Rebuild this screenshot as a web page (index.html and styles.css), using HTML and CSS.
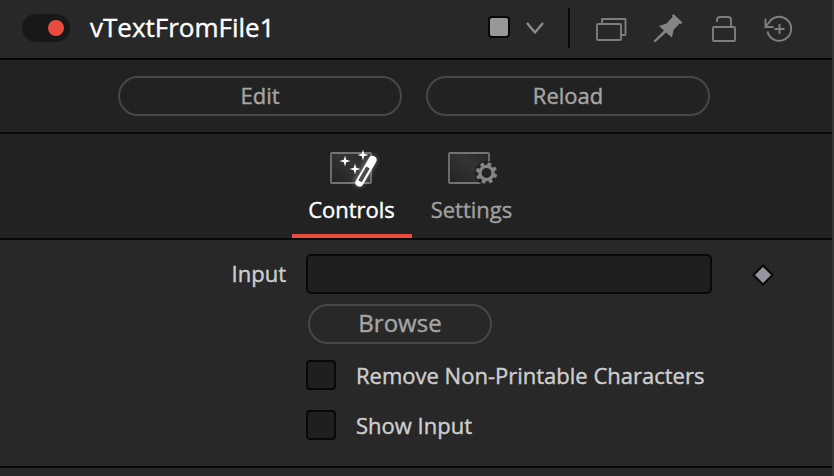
FILE: index.html
```html
<!DOCTYPE html>
<html lang="en">
<head>
<meta charset="utf-8">
<title>vTextFromFile1</title>
<link rel="stylesheet" href="styles.css">
</head>
<body>
<main class="panel">
  <header class="header">
    <span class="toggle"><span class="toggle-dot"></span></span>
    <h1 class="title">vTextFromFile1</h1>
    <span class="swatch"></span>
    <svg class="chevron" width="20" height="16" viewBox="0 0 20 16"><path d="M2 3l8 9.500 8-9.500" fill="none" stroke="#8c8c8c" stroke-width="2.400"/></svg>
    <span class="divider"></span>
    <div class="tools">
      <svg width="34" height="30" viewBox="0 0 34 30" fill="none" stroke="#7e7e7e" stroke-width="1.900"><path d="M7 10V5.500Q7 5 7.500 5H30Q30.500 5 30.500 5.500V20.500Q30.500 21 30 21H26"/><rect x="2" y="10" width="24" height="16" rx="1"/></svg>
      <svg width="32" height="30" viewBox="0 0 32 30"><path d="M20.500 0L29.500 8.500 28 10 26.500 9.500 20.500 16 19 23.500 13 18.500 2.500 28 1 28 1 26.500 11 16.500 6 12 13.500 9.500 19.500 3 19 1.500Z" fill="#858585"/></svg>
      <svg width="28" height="30" viewBox="0 0 28 30" fill="none" stroke="#7e7e7e" stroke-width="1.900"><rect x="4" y="13" width="22" height="14" rx="1"/><path d="M8 8V6Q8 3 11 3H19Q22 3 22 6V13"/></svg>
      <svg width="34" height="30" viewBox="0 0 34 30" fill="none" stroke="#808080" stroke-width="1.900"><path d="M7.400 9.500A12 12 0 1 1 6.500 17.500M4.500 4.500V13H12.500M5 12L8 8.500M18.500 10V20M13.500 15H23.500"/></svg>
    </div>
  </header>
  <section class="actions">
    <button class="pill">Edit</button>
    <button class="pill">Reload</button>
  </section>
  <nav class="tabs">
    <a class="tab active">
      <svg width="64" height="50" viewBox="0 0 64 50">
        <defs>
          <linearGradient id="screen" x1="0" y1="1" x2="1" y2="0"><stop offset="0" stop-color="#222"/><stop offset=".6" stop-color="#343434"/><stop offset="1" stop-color="#262626"/></linearGradient>
          <filter id="glow" x="-60%" y="-60%" width="220%" height="220%"><feGaussianBlur stdDeviation="2.600"/></filter>
        </defs>
        <rect x="11" y="11" width="40" height="30" rx="1" fill="url(#screen)" stroke="#747474" stroke-width="1.800"/>
        <path d="M52 18L39 40" stroke="#aaa" stroke-width="10" stroke-linecap="round" opacity=".5" filter="url(#glow)"/>
        <path d="M25 13.500l1.200 4.300 4.300 1.200-4.300 1.200-1.200 4.300-1.200-4.300-4.300-1.200 4.300-1.200zM43 7.500l1.200 4.300 4.300 1.200-4.300 1.200-1.200 4.300-1.200-4.300-4.300-1.200 4.300-1.200zM35 21.500l1.200 4.300 4.300 1.200-4.300 1.200-1.200 4.300-1.200-4.300-4.300-1.200 4.300-1.200z" fill="#fff"/>
        <path d="M52.500 18L39.500 40.500" stroke="#fff" stroke-width="8.200" stroke-linecap="round"/>
        <path d="M48 25.500L40 39.300" stroke="#4c4c4c" stroke-width="4"/>
      </svg>
      <span class="tab-label">Controls</span>
    </a>
    <a class="tab">
      <svg width="64" height="50" viewBox="0 0 64 50">
        <rect x="9" y="11" width="40" height="30" rx="1" fill="url(#screen)" stroke="#747474" stroke-width="1.800"/>
        <circle cx="46.500" cy="31" r="12" fill="#222"/>
        <circle cx="46.500" cy="31" r="6.600" fill="none" stroke="#858585" stroke-width="3.400"/>
        <g transform="rotate(18 46.500 31)" stroke="#858585" stroke-width="3.800"><path id="teeth" d="M46.500 24V20.300M46.500 38V41.700M39.500 31H35.800M53.500 31H57.200"/><use href="#teeth" transform="rotate(45 46.500 31)"/></g>
      </svg>
      <span class="tab-label">Settings</span>
    </a>
  </nav>
  <section class="controls">
    <label class="label" for="file">Input</label>
    <input class="field" id="file" type="text">
    <svg class="keyframe" width="24" height="24" viewBox="0 0 24 24"><path d="M12 2.500L21.500 12 12 21.500 2.500 12z" fill="#9595a0" stroke="#080808" stroke-width="2"/></svg>
    <button class="pill browse">Browse</button>
    <label class="check"><span class="box"></span><span>Remove Non-Printable Characters</span></label>
    <label class="check"><span class="box"></span><span>Show Input</span></label>
  </section>
</main>
</body>
</html>
```

FILE: styles.css
```css
* { box-sizing: border-box; }
body {
  margin: 0;
  height: 476px;
  overflow: hidden;
  background: #282828;
  color: #cecece;
  font: 22px/30px "Open Sans", sans-serif;
  -webkit-text-stroke: 0.4px currentColor;
}
.panel {
  height: 476px;
  border-right: 2px solid #383736;
}
.header {
  display: flex;
  align-items: center;
  height: 60px;
  padding: 0 0 4px 22px;
  border-bottom: 2px solid #080808;
}
.toggle {
  display: flex;
  align-items: center;
  justify-content: flex-end;
  width: 48px;
  height: 28px;
  margin-top: 2px;
  padding-right: 6px;
  border-radius: 14px;
  background: #181818;
}
.toggle-dot {
  width: 16px;
  height: 16px;
  border-radius: 50%;
  background: #e94b3e;
}
.title {
  width: 398px;
  margin: 0 0 0 20px;
  color: #fff;
  font-size: 26px;
  line-height: 36px;
  font-weight: 400;
}
.swatch {
  width: 22px;
  height: 22px;
  border: 2px solid #080808;
  border-radius: 4px;
  background: #979797;
}
.chevron { margin: 1px 0 0 15px; }
.divider {
  width: 2px;
  height: 40px;
  margin: 2px 0 0 23px;
  background: #080808;
}
.tools {
  display: flex;
  gap: 24px;
  margin: 4px 0 0 25px;
}
.actions {
  display: flex;
  justify-content: center;
  gap: 24px;
  height: 74px;
  padding: 16px 4px 0 0;
  background: #222;
  border-bottom: 2px solid #080808;
}
.pill {
  width: 284px;
  height: 40px;
  padding: 0 0 2px;
  border: 2px solid #474747;
  border-radius: 20px;
  background: transparent;
  color: #a5a5a5;
  font: 22px/30px "Open Sans", sans-serif;
  -webkit-text-stroke: 0.4px currentColor;
}
.tabs {
  display: flex;
  height: 106px;
  padding: 8px 0 0 292px;
  background: #222;
  border-bottom: 2px solid #080808;
}
.tab {
  display: flex;
  flex-direction: column;
  align-items: center;
  width: 120px;
  color: #a0a0a0;
}
.tab.active {
  color: #fff;
  border-bottom: 4px solid #e94b3e;
}
.tab-label {
  margin-top: 2px;
  padding-right: 1px;
}
.controls {
  display: grid;
  grid-template-columns: 286px 406px 24px;
  grid-template-rows: 40px 40px 30px 30px;
  column-gap: 20px;
  height: 228px;
  padding-top: 14px;
  border-bottom: 2px solid #080808;
}
.label {
  padding-top: 4px;
  text-align: right;
}
.field {
  width: 406px;
  height: 40px;
  border: 2px solid #080808;
  border-radius: 5px;
  background: #1f1f1f;
  color: #cecece;
  font: inherit;
}
.keyframe { margin: 9px 0 0 19px; }
.browse {
  grid-column: 2;
  width: 184px;
  margin: 10px 0 0 2px;
  font-size: 24px;
}
.check {
  grid-column: 2;
  display: flex;
  align-items: center;
  gap: 20px;
  height: 30px;
  margin-top: 26px;
  white-space: nowrap;
}
.check + .check { margin-top: 46px; }
.box {
  width: 30px;
  height: 30px;
  border: 2px solid #080808;
  border-radius: 4px;
  background: #1f1f1f;
}
```
